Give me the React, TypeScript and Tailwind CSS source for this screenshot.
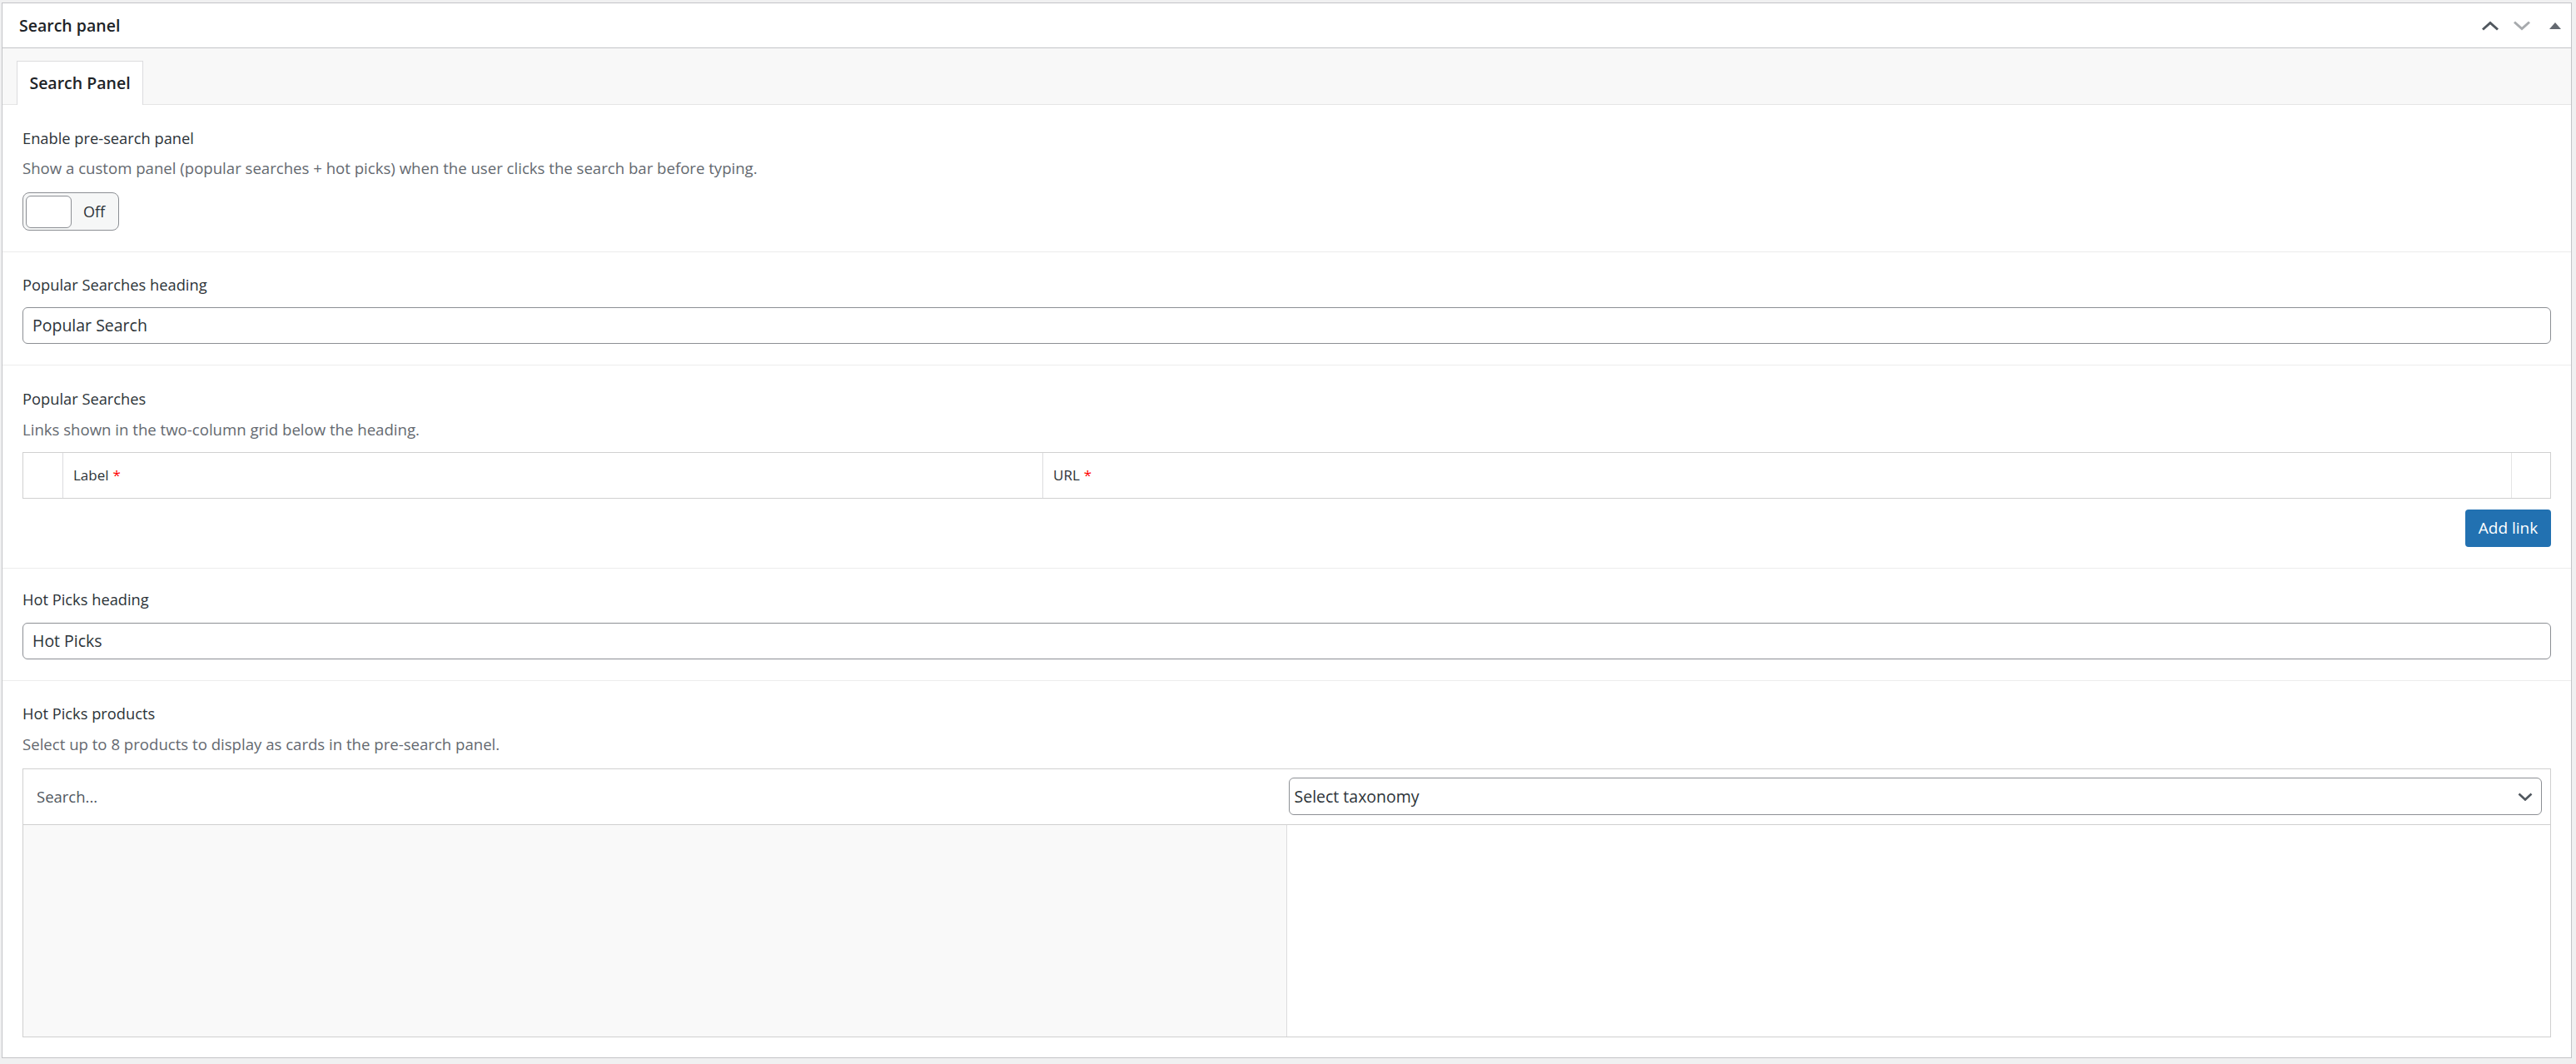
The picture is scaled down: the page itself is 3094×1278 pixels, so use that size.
import React from "react";

const font = { fontFamily: '"Open Sans", "Noto Sans", sans-serif' };

function ChevronUp({ color }: { color: string }) {
  return (
    <svg width="22" height="12" viewBox="0 0 22 12" fill="none">
      <path d="M2 10.5 L11 2.5 L20 10.5" stroke={color} strokeWidth="3" strokeLinecap="butt" strokeLinejoin="miter" />
    </svg>
  );
}
function ChevronDown({ color }: { color: string }) {
  return (
    <svg width="22" height="12" viewBox="0 0 22 12" fill="none">
      <path d="M2 1.5 L11 9.5 L20 1.5" stroke={color} strokeWidth="3" strokeLinecap="butt" strokeLinejoin="miter" />
    </svg>
  );
}

function Label({ children }: { children: React.ReactNode }) {
  return <div className="text-[18.3px] leading-[26px] text-[#2c3338]">{children}</div>;
}
function Desc({ children }: { children: React.ReactNode }) {
  return <div className="text-[18.6px] leading-[26px] text-[#646970]">{children}</div>;
}

export default function App() {
  return (
    <div style={font} className="min-h-screen w-full bg-[#f0f0f1] pt-[3px] pl-[2px] pr-[5px] pb-[6px]">
      <div className="border border-[#c3c4c7] bg-white">
        {/* header */}
        <div className="flex h-[54px] items-center justify-between border-b border-[#c3c4c7] pl-[20px] pr-[12px]">
          <div className="text-[19.5px] font-semibold text-[#1d2327]">Search panel</div>
          <div className="flex items-center gap-[16px]">
            <ChevronUp color="#50575e" />
            <ChevronDown color="#a7aaad" />
            <svg width="14" height="8" viewBox="0 0 14 8" className="ml-[6px]">
              <polygon points="7,0 14,8 0,8" fill="#646970" />
            </svg>
          </div>
        </div>
        {/* tab bar */}
        <div className="flex h-[68px] items-end border-b border-[#e5e5e5] bg-[#f8f8f8] pl-[17px]">
          <div className="-mb-px flex h-[53px] w-[152px] items-center justify-center border border-b-0 border-[#dcdcde] bg-white text-[19.5px] font-semibold text-[#1d2327]">
            Search Panel
          </div>
        </div>

        {/* section 1 */}
        <div className="border-b border-[#ececec] px-[24px] pt-[27px] pb-[25px]">
          <Label>Enable pre-search panel</Label>
          <div className="mt-[10px]">
            <Desc>Show a custom panel (popular searches + hot picks) when the user clicks the search bar before typing.</Desc>
          </div>
          <div className="mt-[16px] flex h-[46px] w-[116px] items-center rounded-[8px] border border-[#8c8f94] bg-[#f6f7f7] p-[3px]">
            <div className="h-[39px] w-[55px] rounded-[6px] border border-[#8c8f94] bg-white" />
            <div className="ml-[14px] text-[18px] text-[#2c3338]">Off</div>
          </div>
        </div>

        {/* section 2 */}
        <div className="border-b border-[#ececec] px-[24px] pt-[26px] pb-[25px]">
          <Label>Popular Searches heading</Label>
          <div className="mt-[14px] flex h-[44px] items-center rounded-[6px] border border-[#8c8f94] px-[11px] text-[19.5px] text-[#2c3338]">
            Popular Search
          </div>
        </div>

        {/* section 3 */}
        <div className="border-b border-[#ececec] px-[24px] pt-[27px] pb-[25px]">
          <Label>Popular Searches</Label>
          <div className="mt-[11px]">
            <Desc>Links shown in the two-column grid below the heading.</Desc>
          </div>
          <div className="mt-[14px] flex h-[56px] border border-[#d0d0d0] text-[17px] text-[#2c3338]">
            <div className="w-[48px] border-r border-[#dcdcde]" />
            <div className="flex w-[1177px] items-center border-r border-[#dcdcde] pl-[12px]">
              Label <span className="ml-[5px] text-[#ff0000]">*</span>
            </div>
            <div className="flex flex-1 items-center border-r border-[#e5e5e5] pl-[12px]">
              URL <span className="ml-[5px] text-[#ff0000]">*</span>
            </div>
            <div className="w-[46px]" />
          </div>
          <div className="mt-[13px] flex justify-end">
            <div className="flex h-[45px] w-[103px] items-center justify-center rounded-[4px] bg-[#2271b1] text-[19px] text-white">
              Add link
            </div>
          </div>
        </div>

        {/* section 4 */}
        <div className="border-b border-[#ececec] px-[24px] pt-[24px] pb-[25px]">
          <Label>Hot Picks heading</Label>
          <div className="mt-[15px] flex h-[44px] items-center rounded-[6px] border border-[#8c8f94] px-[11px] text-[19.5px] text-[#2c3338]">
            Hot Picks
          </div>
        </div>

        {/* section 5 */}
        <div className="px-[24px] pt-[26px] pb-[24px]">
          <Label>Hot Picks products</Label>
          <div className="mt-[11px]">
            <Desc>Select up to 8 products to display as cards in the pre-search panel.</Desc>
          </div>
          <div className="mt-[16px] border border-[#d0d0d0]">
            <div className="grid h-[67px] grid-cols-2 border-b border-[#d0d0d0]">
              <div className="flex items-center pl-[16px] text-[18.5px] text-[#50575e]">Search...</div>
              <div className="pl-[2px] pr-[10px] py-[10px]">
                <div className="flex h-[45px] items-center justify-between rounded-[6px] border border-[#8c8f94] pl-[6px] pr-[10px] text-[19.5px] text-[#2c3338]">
                  <span>Select taxonomy</span>
                  <svg width="18" height="10" viewBox="0 0 18 10" fill="none">
                    <path d="M1.5 1.5 L9 8.5 L16.5 1.5" stroke="#50575e" strokeWidth="2.6" />
                  </svg>
                </div>
              </div>
            </div>
            <div className="grid h-[254px] grid-cols-2">
              <div className="border-r border-[#dcdcde] bg-[#f9f9f9]" />
              <div className="bg-white" />
            </div>
          </div>
        </div>
      </div>
    </div>
  );
}
